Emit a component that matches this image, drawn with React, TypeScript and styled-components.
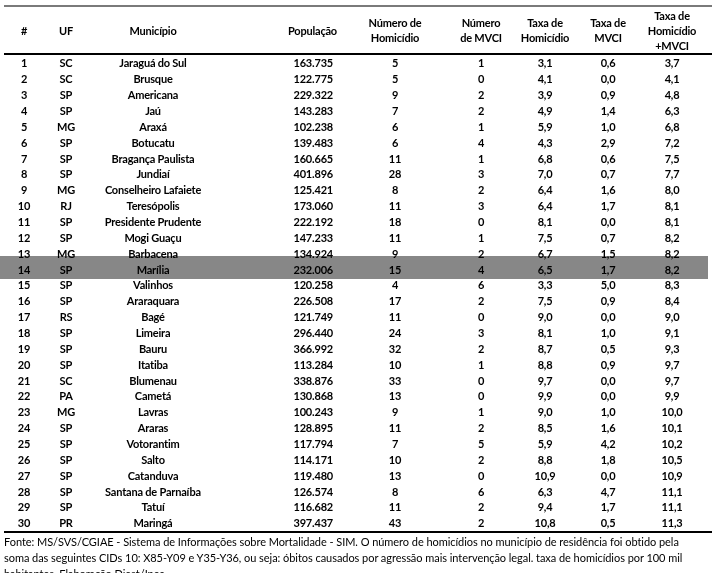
import React from "react"
import styled, { createGlobalStyle } from "styled-components"

type Row = [string, string, string, string, string, string, string, string, string]

const rows: Row[] = [
    ["1", "SC", "Jaraguá do Sul", "163.735", "5", "1", "3,1", "0,6", "3,7"],
    ["2", "SC", "Brusque", "122.775", "5", "0", "4,1", "0,0", "4,1"],
    ["3", "SP", "Americana", "229.322", "9", "2", "3,9", "0,9", "4,8"],
    ["4", "SP", "Jaú", "143.283", "7", "2", "4,9", "1,4", "6,3"],
    ["5", "MG", "Araxá", "102.238", "6", "1", "5,9", "1,0", "6,8"],
    ["6", "SP", "Botucatu", "139.483", "6", "4", "4,3", "2,9", "7,2"],
    ["7", "SP", "Bragança Paulista", "160.665", "11", "1", "6,8", "0,6", "7,5"],
    ["8", "SP", "Jundiaí", "401.896", "28", "3", "7,0", "0,7", "7,7"],
    ["9", "MG", "Conselheiro Lafaiete", "125.421", "8", "2", "6,4", "1,6", "8,0"],
    ["10", "RJ", "Teresópolis", "173.060", "11", "3", "6,4", "1,7", "8,1"],
    ["11", "SP", "Presidente Prudente", "222.192", "18", "0", "8,1", "0,0", "8,1"],
    ["12", "SP", "Mogi Guaçu", "147.233", "11", "1", "7,5", "0,7", "8,2"],
    ["13", "MG", "Barbacena", "134.924", "9", "2", "6,7", "1,5", "8,2"],
    ["14", "SP", "Marília", "232.006", "15", "4", "6,5", "1,7", "8,2"],
    ["15", "SP", "Valinhos", "120.258", "4", "6", "3,3", "5,0", "8,3"],
    ["16", "SP", "Araraquara", "226.508", "17", "2", "7,5", "0,9", "8,4"],
    ["17", "RS", "Bagé", "121.749", "11", "0", "9,0", "0,0", "9,0"],
    ["18", "SP", "Limeira", "296.440", "24", "3", "8,1", "1,0", "9,1"],
    ["19", "SP", "Bauru", "366.992", "32", "2", "8,7", "0,5", "9,3"],
    ["20", "SP", "Itatiba", "113.284", "10", "1", "8,8", "0,9", "9,7"],
    ["21", "SC", "Blumenau", "338.876", "33", "0", "9,7", "0,0", "9,7"],
    ["22", "PA", "Cametá", "130.868", "13", "0", "9,9", "0,0", "9,9"],
    ["23", "MG", "Lavras", "100.243", "9", "1", "9,0", "1,0", "10,0"],
    ["24", "SP", "Araras", "128.895", "11", "2", "8,5", "1,6", "10,1"],
    ["25", "SP", "Votorantim", "117.794", "7", "5", "5,9", "4,2", "10,2"],
    ["26", "SP", "Salto", "114.171", "10", "2", "8,8", "1,8", "10,5"],
    ["27", "SP", "Catanduva", "119.480", "13", "0", "10,9", "0,0", "10,9"],
    ["28", "SP", "Santana de Parnaíba", "126.574", "8", "6", "6,3", "4,7", "11,1"],
    ["29", "SP", "Tatuí", "116.682", "11", "2", "9,4", "1,7", "11,1"],
    ["30", "PR", "Maringá", "397.437", "43", "2", "10,8", "0,5", "11,3"],
]

const headers = [
    ["#"],
    ["UF"],
    ["Município"],
    ["População"],
    ["Número de", "Homicídio"],
    ["Número", "de MVCI"],
    ["Taxa de", "Homicídio"],
    ["Taxa de", "MVCI"],
    ["Taxa de", "Homicídio", "+MVCI"],
]

const HIGHLIGHT_ROW = "14"
const COLUMNS = "40px 44px 130px 127px 100px 72px 56px 70px 58px"

const GlobalStyle = createGlobalStyle`
    body {
        margin: 0;
        background: #ffffff;
        font-family: Lato, "Noto Sans", sans-serif;
        color: #000000;
        overflow: hidden;
    }
`

const Page = styled.div`
    width: 719px;
    height: 573px;
    padding: 5px 0 0 4px;
    box-sizing: border-box;
    overflow: hidden;
`

const Table = styled.div`
    width: 708px;
    border-top: 2px solid #7a7a7a;
`

const HeaderRow = styled.div`
    display: grid;
    grid-template-columns: ${COLUMNS};
    height: 46px;
    border-bottom: 2px solid #000000;
`

const HeaderCell = styled.div<{ $right?: boolean }>`
    display: flex;
    flex-direction: column;
    justify-content: center;
    align-items: ${(p) => (p.$right ? "flex-end" : "center")};
    padding-right: ${(p) => (p.$right ? "8px" : "0")};
    font-size: 11px;
    font-weight: 700;
    line-height: 15px;
    letter-spacing: -0.2px;
    white-space: nowrap;
`

const Body = styled.div`
    display: flex;
    flex-direction: column;
    border-bottom: 2px solid #000000;
`

const DataRow = styled.div<{ $highlight?: boolean }>`
    position: relative;
    display: grid;
    grid-template-columns: ${COLUMNS};
    height: 15.86px;
    align-items: center;

    ${(p) =>
        p.$highlight &&
        `
        &::after {
            content: "";
            position: absolute;
            left: -4px;
            right: 4px;
            top: -5px;
            bottom: -2px;
            background: #878787;
            mix-blend-mode: multiply;
        }
    `}
`

const Cell = styled.div<{ $right?: boolean }>`
    text-align: ${(p) => (p.$right ? "right" : "center")};
    padding-right: ${(p) => (p.$right ? "12px" : "0")};
    font-size: 11px;
    font-weight: 700;
    line-height: 15px;
    letter-spacing: -0.2px;
    white-space: nowrap;
`

const Footer = styled.div`
    width: 712px;
    padding-top: 1px;
    font-size: 11px;
    line-height: 16px;
    letter-spacing: -0.05px;
`

const FooterLine = styled.div`
    white-space: nowrap;
`

const App: React.FC = () => {
    return (
        <Page>
            <GlobalStyle />
            <Table>
                <HeaderRow>
                    {headers.map((lines, i) => (
                        <HeaderCell key={i} $right={i === 3}>
                            {lines.map((line) => (
                                <span key={line}>{line}</span>
                            ))}
                        </HeaderCell>
                    ))}
                </HeaderRow>
                <Body>
                    {rows.map((row) => (
                        <DataRow key={row[0]} $highlight={row[0] === HIGHLIGHT_ROW}>
                            {row.map((value, i) => (
                                <Cell key={i} $right={i === 3}>
                                    {value}
                                </Cell>
                            ))}
                        </DataRow>
                    ))}
                </Body>
            </Table>
            <Footer>
                <FooterLine>
                    Fonte: MS/SVS/CGIAE - Sistema de Informações sobre Mortalidade - SIM. O número de
                    homicídios no município de residência foi obtido pela
                </FooterLine>
                <FooterLine>
                    soma das seguintes CIDs 10: X85-Y09 e Y35-Y36, ou seja: óbitos causados por agressão
                    mais intervenção legal. taxa de homicídios por 100 mil
                </FooterLine>
                <FooterLine>habitantes. Elaboração Diest/Ipea.</FooterLine>
            </Footer>
        </Page>
    )
}

export default App
